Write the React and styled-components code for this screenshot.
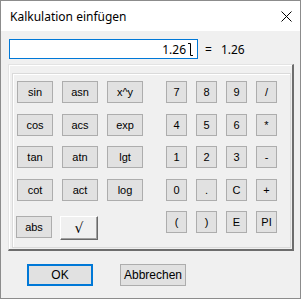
import React from "react";
import styled, { createGlobalStyle } from "styled-components";

const GlobalStyle = createGlobalStyle`
  html, body {
    margin: 0;
    background: #ffffff;
  }
`;

const Window = styled.div`
  width: 301px;
  height: 299px;
  box-sizing: border-box;
  border: 1px solid #8c8c8c;
  background: #f0f0f0;
  display: flex;
  flex-direction: column;
  font-family: "Liberation Sans", Arial, sans-serif;
`;

const TitleBar = styled.div`
  height: 30px;
  background: #ffffff;
  display: flex;
  align-items: center;
  justify-content: space-between;
  padding: 0 8px 0 9px;
  font-family: "Noto Sans", sans-serif;
  font-size: 12px;
  color: #000;
`;

const Client = styled.div`
  padding: 8px 0 0 8px;
`;

const InputRow = styled.div`
  display: flex;
  align-items: center;
  font-family: "Noto Sans", sans-serif;
  font-size: 12px;
`;

const Field = styled.div`
  width: 189px;
  height: 20px;
  box-sizing: border-box;
  border: 1px solid #0078d7;
  background: #fff;
  display: flex;
  align-items: center;
  justify-content: flex-end;
  padding-right: 3px;
  gap: 1px;
`;

const Result = styled.span`
  margin-left: 7px;
  span + span {
    margin-left: 9px;
  }
`;

const Outer = styled.div`
  margin: 5px 0 0 -1px;
  width: 286px;
  height: 187px;
  box-sizing: border-box;
  border-style: solid;
  border-width: 1px 2px 2px 1px;
  border-color: #e3e3e3 #6d6d6d #6d6d6d #e3e3e3;
  box-shadow: inset 1px 1px 0 #ffffff;
  padding: 8px 1px 1px 3px;
`;

const Inner = styled.div`
  height: 100%;
  box-sizing: border-box;
  border: 1px solid #dadada;
  box-shadow: inset 1px 1px 0 #ffffff;
  display: flex;
  padding: 7px 0 0 4px;
`;

const LeftCol = styled.div`
  display: flex;
  flex-direction: column;
`;

const KeyGrid = styled.div`
  display: grid;
  grid-template-columns: repeat(${(p) => p.$cols}, ${(p) => p.$w}px);
  grid-auto-rows: 22px;
  column-gap: 9px;
  row-gap: 10.5px;
  margin-left: ${(p) => p.$offset || 0}px;
`;

const ExtraRow = styled.div`
  display: flex;
  align-items: flex-start;
  gap: 8px;
  margin: 15.5px 0 0 -1px;
`;

const Key = styled.button`
  width: ${(p) => (p.$w ? `${p.$w}px` : "auto")};
  height: ${(p) => p.$h || 22}px;
  box-sizing: border-box;
  margin: 0;
  padding: 0;
  border: 1px solid #adadad;
  background: #e1e1e1;
  font-family: "Liberation Sans", Arial, sans-serif;
  font-size: 11px;
  color: #000;
  display: flex;
  align-items: center;
  justify-content: center;
`;

const RaisedKey = styled(Key)`
  border-style: solid;
  border-width: 1px;
  border-color: #ffffff #696969 #696969 #ffffff;
  box-shadow: inset -1px -1px 0 #a0a0a0;
  background: #f0f0f0;
  font-family: "DejaVu Sans", sans-serif;
  font-size: 14px;
`;

const ButtonRow = styled.div`
  display: flex;
  gap: 27px;
  margin: 13px 0 0 18px;
`;

const DialogButton = styled(Key)`
  width: 66px;
  font-size: 12px;
  border: ${(p) => (p.$default ? "2px solid #0078d7" : "1px solid #adadad")};
`;

const Caret = () => (
  <svg width="7" height="13" viewBox="0 0 7 13">
    <path d="M3.5 0.5 V12.5 M1 0.5 H3.5 M3.5 12.5 H6" stroke="#000" strokeWidth="1" fill="none" />
  </svg>
);

const CloseIcon = () => (
  <svg width="11" height="11" viewBox="0 0 11 11">
    <path d="M0.5 0.5 L10.5 10.5 M10.5 0.5 L0.5 10.5" stroke="#000" strokeWidth="1" fill="none" />
  </svg>
);

const funcKeys = ["sin", "asn", "x^y", "cos", "acs", "exp", "tan", "atn", "lgt", "cot", "act", "log"];
const numKeys = ["7", "8", "9", "/", "4", "5", "6", "*", "1", "2", "3", "-", "0", ".", "C", "+", "(", ")", "E", "PI"];

export default function App() {
  return (
    <>
      <GlobalStyle />
      <Window>
        <TitleBar>
          <span>Kalkulation einfügen</span>
          <CloseIcon />
        </TitleBar>
        <Client>
          <InputRow>
            <Field>
              <span>1.26</span>
              <Caret />
            </Field>
            <Result>
              <span>=</span>
              <span>1.26</span>
            </Result>
          </InputRow>
          <Outer>
            <Inner>
              <LeftCol>
                <KeyGrid $cols={3} $w={36}>
                  {funcKeys.map((k) => (
                    <Key key={k} $w={36}>
                      {k}
                    </Key>
                  ))}
                </KeyGrid>
                <ExtraRow>
                  <Key $w={36}>abs</Key>
                  <RaisedKey $w={38} $h={24}>
                    √
                  </RaisedKey>
                </ExtraRow>
              </LeftCol>
              <KeyGrid $cols={4} $w={21} $offset={23}>
                {numKeys.map((k) => (
                  <Key key={k} $w={21}>
                    {k}
                  </Key>
                ))}
              </KeyGrid>
            </Inner>
          </Outer>
          <ButtonRow>
            <DialogButton $default>OK</DialogButton>
            <DialogButton>Abbrechen</DialogButton>
          </ButtonRow>
        </Client>
      </Window>
    </>
  );
}
